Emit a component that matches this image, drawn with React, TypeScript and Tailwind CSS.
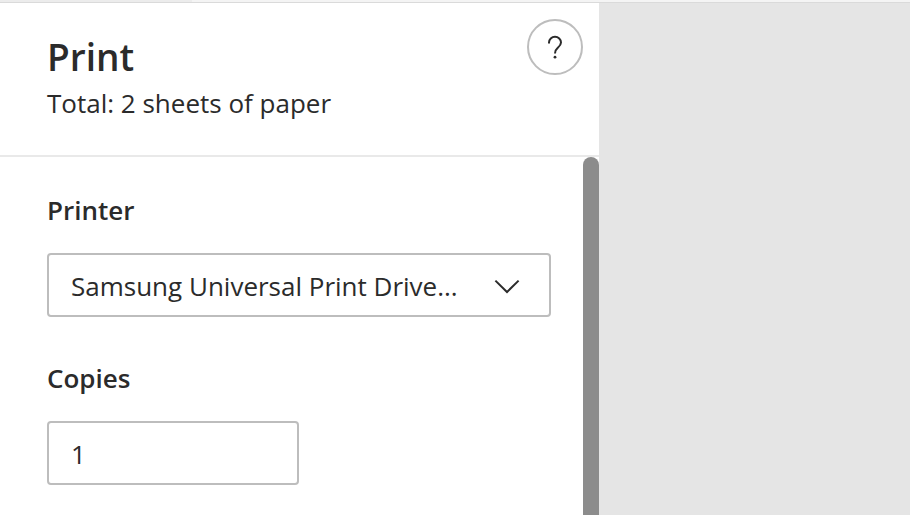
import { useState } from "react";

/* ---------- Icons ---------- */
function ChevronIcon() {
  return (
    <svg
      viewBox="0 0 26 18"
      className="pointer-events-none absolute right-[31px] h-[18px] w-[26px]"
      fill="none"
      stroke="#2b2b2b"
      strokeWidth="2"
      aria-hidden="true"
    >
      <path d="M1.4 4.6 13 16 24.6 4.6" />
    </svg>
  );
}

function QuestionIcon() {
  return (
    <svg
      viewBox="0 0 14 24"
      className="h-6 w-[14px]"
      fill="none"
      stroke="#2b2b2b"
      strokeWidth="2"
      aria-hidden="true"
    >
      <path d="M1 8.6V7.6a6 5.8 0 0 1 12 0c0 2.4-1.5 3.7-3.2 5.2C8.2 14.200 7 15.400 7 18.400" />
      <circle cx="7" cy="22.200" r="1.400" fill="#2b2b2b" stroke="none" />
    </svg>
  );
}

/* ---------- Component ---------- */
export default function App() {
  const [printer, setPrinter] = useState("samsung");
  const [copies, setCopies] = useState("1");

  return (
    <div className="flex h-screen flex-col overflow-hidden bg-[#e5e5e5] font-['Open_Sans',sans-serif] text-[#2b2b2b]">
      {/* BROWSER EDGE */}
      <div className="flex h-[3px] shrink-0 border-b border-[#dadada] bg-[#f4f4f4]">
        <div className="w-48 bg-[#ececec]" />
      </div>

      <div className="grid min-h-0 flex-1 grid-cols-[minmax(0,599px)_1fr]">
        <section className="flex min-h-0 flex-col bg-white">
          {/* HEADER */}
          <header className="flex items-start justify-between border-b-2 border-[#e9e9e9] pt-4 pr-4 pb-7 pl-[47px]">
            <div className="pt-4">
              <h1 className="text-[37px] leading-[44px] font-semibold">
                Print
              </h1>
              <p className="text-[26px] leading-[48px]">
                Total: 2 sheets of paper
              </p>
            </div>
            <button
              type="button"
              aria-label="Help"
              className="flex size-14 items-center justify-center rounded-full border-2 border-[#bdbdbd]"
            >
              <QuestionIcon />
            </button>
          </header>

          {/* SETTINGS */}
          <div className="flex min-h-0 flex-1">
            <form className="min-w-0 flex-1 overflow-hidden pt-9 pr-8 pl-[47px]">
              <div className="mb-11">
                <label
                  htmlFor="printer"
                  className="mb-[26px] block text-[26px] leading-[34px] font-semibold"
                >
                  Printer
                </label>
                <div className="relative flex items-center">
                  <select
                    id="printer"
                    value={printer}
                    onChange={(e) => setPrinter(e.target.value)}
                    className="h-16 w-full appearance-none rounded-[4px] border-2 border-[#bdbdbd] bg-white pt-0.5 pr-16 pl-[22px] text-[26px]"
                  >
                    <option value="samsung">
                      Samsung Universal Print Drive...
                    </option>
                    <option value="pdf">Save as PDF</option>
                  </select>
                  <ChevronIcon />
                </div>
              </div>

              <div>
                <label
                  htmlFor="copies"
                  className="mb-[26px] block text-[26px] leading-[34px] font-semibold"
                >
                  Copies
                </label>
                <input
                  id="copies"
                  type="text"
                  inputMode="numeric"
                  value={copies}
                  onChange={(e) => setCopies(e.target.value)}
                  className="h-16 w-1/2 rounded-[4px] border-2 border-[#bdbdbd] bg-white px-[22px] pt-0.5 text-[26px]"
                />
              </div>
            </form>

            {/* SCROLLBAR */}
            <div className="w-4 shrink-0 rounded-t-full bg-[#8c8c8c]" />
          </div>
        </section>

        {/* PREVIEW */}
        <main aria-label="Preview" />
      </div>
    </div>
  );
}
